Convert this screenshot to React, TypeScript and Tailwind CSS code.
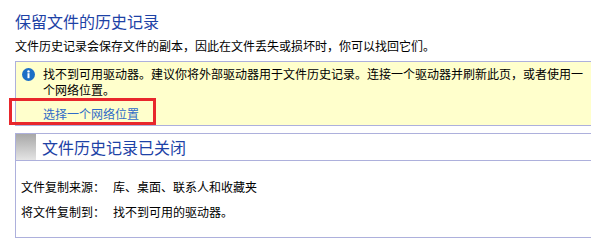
import React from "react";

export default function App() {
  const font = { fontFamily: '"Noto Sans CJK SC", "Noto Sans", sans-serif' };
  return (
    <div
      className="relative w-[591px] h-[244px] overflow-hidden bg-white text-black"
      style={font}
    >
      <div className="pl-[15px]">
        <div className="mt-[10px] h-[22px] leading-[22px] text-[16px] text-[#1d42a6] whitespace-nowrap">
          保留文件的历史记录
        </div>
        <div className="mt-[6px] h-[16px] leading-[16px] text-[12px] whitespace-nowrap">
          文件历史记录会保存文件的副本，因此在文件丢失或损坏时，你可以找回它们。
        </div>

        <div className="mt-[7px] border-l border-t border-b border-[#adb0dc] bg-[#ffffcc] pt-[4px] pb-[3px]">
          <div className="flex">
            <div className="w-[19px] shrink-0 flex justify-end pt-[2px]">
              <svg width="13" height="13" viewBox="0 0 13 13">
                <circle cx="6.5" cy="6.5" r="6.5" fill="#1b6ec6" />
                <circle cx="6.5" cy="3.4" r="1.2" fill="#fff" />
                <rect x="5.5" y="5.2" width="2" height="5" fill="#fff" />
              </svg>
            </div>
            <div className="ml-[8px] text-[12px] leading-[16px] whitespace-nowrap">
              <div>找不到可用驱动器。建议你将外部驱动器用于文件历史记录。连接一个驱动器并刷新此页，或者使用一</div>
              <div>个网络位置。</div>
            </div>
          </div>
          <div className="mt-[8px] pl-[27px] h-[16px] leading-[16px] text-[12px] text-[#2f6bc8] whitespace-nowrap">
            选择一个网络位置
          </div>
        </div>

        <div className="mt-[7px] border-l border-t border-b border-[#adb0dc] h-[105px]">
          <div className="flex h-[27px] border-b border-[#adb0dc]">
            <div className="w-[20px] shrink-0 h-full bg-gradient-to-b from-[#a8a8a8] to-[#e4e4e4]" />
            <div className="pl-[6px] leading-[27px] text-[16px] text-[#1d42a6] whitespace-nowrap">
              文件历史记录已关闭
            </div>
          </div>
          <div className="pt-[18px] pl-[5px] text-[12px] leading-[16px]">
            <div className="flex h-[16px]">
              <div className="w-[92px] shrink-0">文件复制来源：</div>
              <div>库、桌面、联系人和收藏夹</div>
            </div>
            <div className="flex h-[16px] mt-[9px]">
              <div className="w-[92px] shrink-0">将文件复制到：</div>
              <div>找不到可用的驱动器。</div>
            </div>
          </div>
        </div>
      </div>

      <div className="absolute left-[9px] top-[98px] w-[147px] h-[27px] border-[3px] border-[#e8272c]" />
    </div>
  );
}
